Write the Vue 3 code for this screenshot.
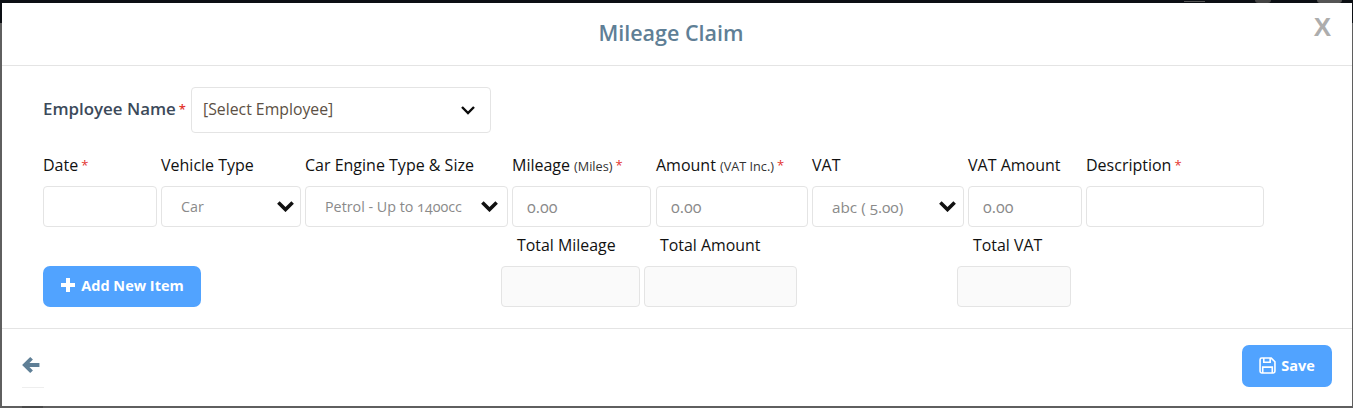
<template>
  <div class="backdrop">
    <span class="peek p1"></span>
    <span class="peek p2"></span>
    <span class="peek p3"></span>
    <span class="peek p4"></span>
    <section class="modal">
      <header class="head">
        <h2>Mileage Claim</h2>
        <span class="close">X</span>
      </header>
      <div class="body">
        <div class="employee">
          <label class="emp-label">Employee Name<i>*</i></label>
          <div class="box emp-select">
            <span>[Select Employee]</span>
            <svg class="chev" viewBox="0 0 16 10"><path d="M2 2l6 6 6-6" /></svg>
          </div>
        </div>
        <div class="rows">
          <div v-for="c in cols" :key="c.label" class="col" :class="c.cls">
            <label>{{ c.label }}<small v-if="c.small">{{ c.small }}</small><i v-if="c.req">*</i></label>
            <div class="box field" :class="{ sel: c.select }">
              <span>{{ c.value }}</span>
              <svg v-if="c.select" class="chev big" viewBox="0 0 16 10"><path d="M2 2l6 6 6-6" /></svg>
            </div>
          </div>
        </div>
        <div class="totals">
          <button class="btn add">
            <svg viewBox="0 0 16 16"><path d="M8 1v14M1 8h14" /></svg>
            Add New Item
          </button>
          <div v-for="t in totals" :key="t.label" class="total" :class="t.cls">
            <label>{{ t.label }}</label>
            <div class="box ro"></div>
          </div>
        </div>
      </div>
      <footer class="foot">
        <div class="back">
          <svg viewBox="0 0 16 16"><path d="M8.500 2L2.500 8l6 6M3.500 8H15.500" /></svg>
          <span class="rule"></span>
        </div>
        <button class="btn save">
          <svg viewBox="0 0 16 16">
            <path d="M1 2.500A1.500 1.500 0 0 1 2.500 1h9L15 4.500v9a1.500 1.500 0 0 1-1.500 1.500h-11A1.500 1.500 0 0 1 1 13.500z" />
            <path d="M4.500 1v4h6V1M3.500 15V9.500h9V15" />
          </svg>
          Save
        </button>
      </footer>
    </section>
  </div>
</template>

<script setup>
const cols = [
  { label: 'Date', req: true, value: '', cls: 'c-date' },
  { label: 'Vehicle Type', value: 'Car', select: true, cls: 'c-veh' },
  { label: 'Car Engine Type & Size', value: 'Petrol - Up to 1400cc', select: true, cls: 'c-eng' },
  { label: 'Mileage', small: '(Miles)', req: true, value: '0.00', cls: 'c-mil' },
  { label: 'Amount', small: '(VAT Inc.)', req: true, value: '0.00', cls: 'c-amt' },
  { label: 'VAT', value: 'abc ( 5.00)', select: true, cls: 'c-vat' },
  { label: 'VAT Amount', value: '0.00', cls: 'c-vata' },
  { label: 'Description', req: true, value: '', cls: 'c-desc' }
]
const totals = [
  { label: 'Total Mileage', cls: 't-mil' },
  { label: 'Total Amount', cls: 't-amt' },
  { label: 'Total VAT', cls: 't-vat' }
]
</script>

<style>
html, body { margin: 0; background: #5f5f5f; overflow: hidden; }
</style>

<style scoped>
.backdrop {
  height: 408px;
  box-sizing: border-box;
  padding: 3px 1px 2px 2px;
  background: linear-gradient(#0c0f14 0 23px, #5f5f5f 23px);
  font-family: "Open Sans", "Noto Sans", sans-serif;
  font-variant-numeric: oldstyle-nums;
  color: #111;
  position: relative;
  overflow: hidden;
}
.peek { position: absolute; }
.p1 { left: 1184px; top: 1px; width: 21px; height: 1px; background: #555; }
.p2 { left: 1255px; top: 0; width: 16px; height: 3px; border-radius: 0 0 8px 8px; background: #444; }
.p3 { left: 1317px; top: 0; width: 25px; height: 3px; border-radius: 0 0 6px 6px; background: #555; }
.p4 { left: 22px; top: 406px; width: 21px; height: 2px; background: #4a4a4a; }
.modal { height: 403px; background: #fff; display: flex; flex-direction: column; position: relative; }
.head {
  height: 63px;
  flex: none;
  box-sizing: border-box;
  padding: 0 12px 4px 0;
  border-bottom: 1px solid #e4e4e4;
  display: flex;
  align-items: center;
  justify-content: center;
  position: relative;
}
h2 { margin: 0; font-size: 21.500px; font-weight: 600; color: #5f7f96; }
.close {
  position: absolute;
  right: 21px;
  top: 9px;
  font-size: 26px;
  font-weight: 700;
  color: #adadad;
  font-family: "Liberation Sans", sans-serif;
}
.body { flex: 1; padding: 21px 0 0 41px; }
.employee { display: flex; align-items: center; height: 46px; }
.emp-label { width: 148px; font-size: 16.900px; font-weight: 600; color: #3c4a5a; white-space: nowrap; margin-top: -3px; }
i { color: #e3342f; font-style: normal; font-size: 13px; margin-left: 3px; vertical-align: 1px; }
.box { box-sizing: border-box; border: 1px solid #e4e4e4; border-radius: 4px; background: #fff; display: flex; align-items: center; }
.emp-select {
  width: 300px;
  height: 46px;
  padding: 0 14px 0 11px;
  justify-content: space-between;
  font-size: 15.800px;
  color: #5c5044;
}
.emp-select span { margin-top: -2px; }
.chev { width: 16px; height: 10px; fill: none; stroke: #0a0a0a; stroke-width: 2.400; margin-top: -1px; }
.chev.big { width: 19px; height: 12px; stroke: #111; stroke-width: 3; flex: none; }
.rows { display: flex; margin-top: 21px; gap: 4px; }
.col { display: flex; flex-direction: column; }
.col label { font-size: 16px; line-height: 22px; height: 32px; white-space: nowrap; }
.col label small { font-size: 12.700px; color: #333; margin-left: 4px; }
.field { height: 41px; padding: 0 14px; font-size: 16px; color: #8a8a8a; white-space: nowrap; }
.field.sel { padding: 0 8px 0 19px; justify-content: space-between; font-size: 14.300px; }
.c-veh .field.sel { padding-right: 5px; }
.c-vat .field.sel { padding-right: 6px; font-size: 15.300px; }
.c-date { width: 114px; }
.c-veh { width: 140px; }
.c-eng { width: 203px; }
.c-mil { width: 139px; margin-right: 1px; }
.c-amt { width: 152px; }
.c-vat { width: 152px; }
.c-vata { width: 114px; }
.c-desc { width: 178px; }
.totals { display: flex; margin-top: 6px; align-items: flex-end; }
.total { display: flex; flex-direction: column; }
.total label { font-size: 15.900px; line-height: 24px; height: 33px; padding-left: 16px; white-space: nowrap; }
.ro { height: 41px; background: #fafafa; }
.t-mil { width: 139px; margin-left: 300px; }
.t-amt { width: 153px; margin-left: 4px; }
.t-vat { width: 114px; margin-left: 160px; }
.btn {
  box-sizing: border-box;
  border: 0;
  border-radius: 7px;
  background: #51a3ff;
  color: #fff;
  font: 700 14.500px "Open Sans", "Noto Sans", sans-serif;
  display: flex;
  align-items: center;
  justify-content: center;
  padding: 0;
}
.btn svg { fill: none; stroke: #fff; }
.add { width: 158px; height: 41px; gap: 5px; flex: none; padding-bottom: 2px; }
.add svg { width: 16px; height: 16px; stroke-width: 4; margin-top: -2px; }
.foot {
  height: 78px;
  flex: none;
  box-sizing: border-box;
  border-top: 1px solid #e4e4e4;
  display: flex;
  justify-content: space-between;
  padding: 16px 20px 0 20px;
}
.back { width: 22px; display: flex; flex-direction: column; padding-top: 11px; }
.back svg { width: 18px; height: 18px; fill: none; stroke: #5f7f96; stroke-width: 3.400; }
.rule { height: 1px; background: #eee; margin-top: 13px; }
.save { width: 90px; height: 42px; gap: 5px; padding-bottom: 2px; }
.save svg { width: 17px; height: 17px; stroke-width: 1.500; }
</style>
